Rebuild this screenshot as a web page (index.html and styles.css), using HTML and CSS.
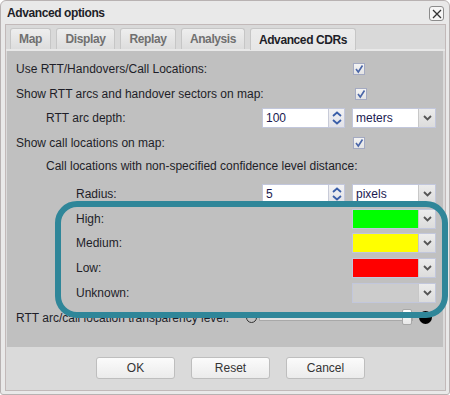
FILE: index.html
```html
<!DOCTYPE html>
<html lang="en">
<head>
  <meta charset="UTF-8">
  <title>Advanced options</title>
  <link rel="stylesheet" href="styles.css">
</head>
<body>
  <div class="dialog">
    <div class="titlebar">
      <span class="title">Advanced options</span>
      <span class="close">
        <svg width="10" height="10" viewBox="0 0 10 10"><path d="M1 1L9 9M9 1L1 9" stroke="#333" stroke-width="1.3"/></svg>
      </span>
    </div>
    <div class="frame">
      <div class="tabs">
        <div class="tab w1">Map</div>
        <div class="tab w2">Display</div>
        <div class="tab w3">Replay</div>
        <div class="tab w4">Analysis</div>
        <div class="tab w5 active">Advanced CDRs</div>
      </div>
      <div class="panel">
        <div class="row">
          <span class="label">Use RTT/Handovers/Call Locations:</span>
          <div class="ctl"><span class="check"><svg width="10" height="10" viewBox="0 0 10 10"><path d="M2 5L4.3 8L8.5 1.5" fill="none" stroke="#4a66a8" stroke-width="1.6"/></svg></span></div>
        </div>
        <div class="row">
          <span class="label">Show RTT arcs and handover sectors on map:</span>
          <div class="ctl"><span class="check"><svg width="10" height="10" viewBox="0 0 10 10"><path d="M2 5L4.3 8L8.5 1.5" fill="none" stroke="#4a66a8" stroke-width="1.6"/></svg></span></div>
        </div>
        <div class="row h24">
          <span class="label ind1">RTT arc depth:</span>
          <div class="ctl">
            <div class="spin"><span class="val">100</span><span class="arrows"><svg width="12" height="16" viewBox="0 0 12 16"><path d="M2 6L6 2.5L10 6M2 10L6 13.5L10 10" fill="none" stroke="#3a5ea8" stroke-width="1.8"/></svg></span></div>
            <div class="select"><span class="val">meters</span><span class="drop"><svg width="9" height="6" viewBox="0 0 9 6"><path d="M1 1L4.5 4.5L8 1" fill="none" stroke="#555" stroke-width="1.8"/></svg></span></div>
          </div>
        </div>
        <div class="row">
          <span class="label">Show call locations on map:</span>
          <div class="ctl"><span class="check"><svg width="10" height="10" viewBox="0 0 10 10"><path d="M2 5L4.3 8L8.5 1.5" fill="none" stroke="#4a66a8" stroke-width="1.6"/></svg></span></div>
        </div>
        <div class="row short">
          <span class="label ind1">Call locations with non-specified confidence level distance:</span>
        </div>
        <div class="row h24">
          <span class="label ind2">Radius:</span>
          <div class="ctl">
            <div class="spin"><span class="val">5</span><span class="arrows"><svg width="12" height="16" viewBox="0 0 12 16"><path d="M2 6L6 2.5L10 6M2 10L6 13.5L10 10" fill="none" stroke="#3a5ea8" stroke-width="1.8"/></svg></span></div>
            <div class="select"><span class="val">pixels</span><span class="drop"><svg width="9" height="6" viewBox="0 0 9 6"><path d="M1 1L4.5 4.5L8 1" fill="none" stroke="#555" stroke-width="1.8"/></svg></span></div>
          </div>
        </div>
        <div class="row">
          <span class="label ind2">High:</span>
          <div class="ctl">
            <div class="select color"><span class="swatch green"></span><span class="drop"><svg width="9" height="6" viewBox="0 0 9 6"><path d="M1 1L4.5 4.5L8 1" fill="none" stroke="#555" stroke-width="1.8"/></svg></span></div>
          </div>
        </div>
        <div class="row h24">
          <span class="label ind2">Medium:</span>
          <div class="ctl">
            <div class="select color"><span class="swatch yellow"></span><span class="drop"><svg width="9" height="6" viewBox="0 0 9 6"><path d="M1 1L4.5 4.5L8 1" fill="none" stroke="#555" stroke-width="1.8"/></svg></span></div>
          </div>
        </div>
        <div class="row">
          <span class="label ind2">Low:</span>
          <div class="ctl">
            <div class="select color"><span class="swatch red"></span><span class="drop"><svg width="9" height="6" viewBox="0 0 9 6"><path d="M1 1L4.5 4.5L8 1" fill="none" stroke="#555" stroke-width="1.8"/></svg></span></div>
          </div>
        </div>
        <div class="row">
          <span class="label ind2">Unknown:</span>
          <div class="ctl">
            <div class="select color"><span class="swatch grey"></span><span class="drop"><svg width="9" height="6" viewBox="0 0 9 6"><path d="M1 1L4.5 4.5L8 1" fill="none" stroke="#555" stroke-width="1.8"/></svg></span></div>
          </div>
        </div>
        <div class="row">
          <span class="label">RTT arc/call location transparency level:</span>
          <div class="slider">
            <span class="dot empty"></span>
            <span class="track"><span class="thumb"></span></span>
            <span class="dot full"></span>
          </div>
        </div>
      </div>
      <div class="footer">
        <button type="button" class="btn">OK</button>
        <button type="button" class="btn">Reset</button>
        <button type="button" class="btn">Cancel</button>
      </div>
    </div>
    <div class="highlight"></div>
  </div>
</body>
</html>
```

FILE: styles.css
```css
body {
  margin: 0;
  font-family: "Liberation Sans", Arial, sans-serif;
  font-size: 12px;
  color: #1e1e28;
  background: #ffffff;
}

.dialog {
  position: relative;
  width: 450px;
  height: 395px;
  box-sizing: border-box;
  border: 1px solid #b8b2b2;
  border-radius: 6px 6px 3px 3px;
  background-color: #e9e9e9;
  padding: 0 3px 3px 4px;
}

.titlebar {
  height: 23px;
  display: flex;
  align-items: center;
  padding-left: 2px;
}

.title {
  font-weight: bold;
  letter-spacing: -0.4px;
  color: #1e1e28;
  flex: 1;
}

.close {
  width: 13px;
  height: 13px;
  border: 1px solid #8c8c8c;
  border-radius: 3px;
  background-color: #f6f6f6;
  display: flex;
  align-items: center;
  justify-content: center;
  margin-right: 2px;
  margin-top: 2px;
}

.frame {
  height: 367px;
  box-sizing: border-box;
  border: 1px solid #c2b9b9;
  background-color: #dadada;
  display: flex;
  flex-direction: column;
}

.tabs {
  height: 24px;
  display: flex;
  align-items: flex-end;
  gap: 5px;
  padding-left: 4px;
  background-color: #d9d9d9;
  border-bottom: 2px solid #e8e8e8;
}

.tab {
  height: 21px;
  box-sizing: border-box;
  border: 1px solid #c6c6c6;
  border-bottom: none;
  border-radius: 3px 3px 0 0;
  background: linear-gradient(#eeeeee, #dddddd);
  font-weight: bold;
  letter-spacing: -0.4px;
  color: #707070;
  display: flex;
  align-items: center;
  justify-content: center;
}

.tab.active {
  background: linear-gradient(#ececec, #e6e6e6);
  color: #1e1e28;
  height: 22px;
  margin-bottom: -1px;
}

.w1 { width: 41px; }
.w2 { width: 59px; }
.w3 { width: 56px; }
.w4 { width: 64px; }
.w5 { width: 106px; }

.panel {
  height: 296px;
  box-sizing: border-box;
  margin: 0 2px 0 1px;
  padding: 5px 7px 0 9px;
  background-color: #c0c0c0;
}

.row {
  height: 25px;
  display: flex;
  align-items: center;
}

.row.h24 {
  height: 24px;
}

.row.short {
  height: 21px;
  margin-bottom: 6px;
}

.label {
  white-space: nowrap;
}

.ind1 {
  padding-left: 30px;
}

.ind2 {
  padding-left: 60px;
}

.ctl {
  margin-left: auto;
  display: grid;
  grid-template-columns: 83px 84px;
  column-gap: 7px;
}

.check {
  grid-column: 2;
  width: 12px;
  height: 12px;
  box-sizing: border-box;
  margin-left: 1px;
  border: 1px solid #a4aac2;
  background: linear-gradient(#f4f4f4, #e4e4e4);
  display: flex;
  align-items: center;
  justify-content: center;
}

.spin, .select {
  height: 20px;
  box-sizing: border-box;
  border: 1px solid #c2c7dc;
  background-color: #ffffff;
  display: flex;
  align-items: center;
}

.val {
  flex: 1;
  padding-left: 3px;
  color: #1a1a50;
}

.arrows {
  width: 15px;
  height: 18px;
  border-left: 1px solid #c8cbd8;
  background: linear-gradient(#f2f2f4, #e2e2e8);
  display: flex;
  align-items: center;
  justify-content: center;
}

.select {
  grid-column: 2;
}

.drop {
  width: 16px;
  height: 18px;
  border-left: 1px solid #c8c8c8;
  background: linear-gradient(#ececec, #dcdcdc);
  display: flex;
  align-items: center;
  justify-content: center;
}

.swatch {
  flex: 1;
  height: 18px;
}

.green { background-color: #00ff00; }
.yellow { background-color: #ffff00; }
.red { background-color: #ff0000; }
.grey { background-color: #cccccc; }

.select.color {
  background-color: #cccccc;
}

.slider {
  margin-left: auto;
  margin-right: 4px;
  width: 186px;
  display: flex;
  align-items: center;
  gap: 2px;
}

.dot {
  width: 11px;
  height: 11px;
  box-sizing: border-box;
  border-radius: 50%;
}

.dot.empty {
  border: 1.5px solid #333333;
}

.dot.full {
  background-color: #000000;
  width: 13px;
  height: 13px;
  margin-left: 4px;
}

.track {
  position: relative;
  flex: 1;
  height: 4px;
  border: 1px solid #a8a8a8;
  background-color: #e2e2e2;
}

.thumb {
  position: absolute;
  right: 0;
  top: -7px;
  width: 10px;
  height: 16px;
  box-sizing: border-box;
  border: 1px solid #a8a8a8;
  border-radius: 2px;
  background: linear-gradient(#ffffff, #e8e8e8);
}

.footer {
  flex: 1;
  display: flex;
  gap: 16px;
  padding: 10px 0 0 90px;
}

.btn {
  width: 79px;
  height: 22px;
  border: 1px solid #bebebe;
  border-radius: 3px;
  background: linear-gradient(#fbfbfb, #ebebeb);
  font-family: "Liberation Sans", Arial, sans-serif;
  font-size: 12px;
  color: #333333;
}

.highlight {
  position: absolute;
  left: 54px;
  top: 200px;
  width: 393px;
  height: 117px;
  box-sizing: border-box;
  border: 6px solid #2f8699;
  border-radius: 22px;
}
```
